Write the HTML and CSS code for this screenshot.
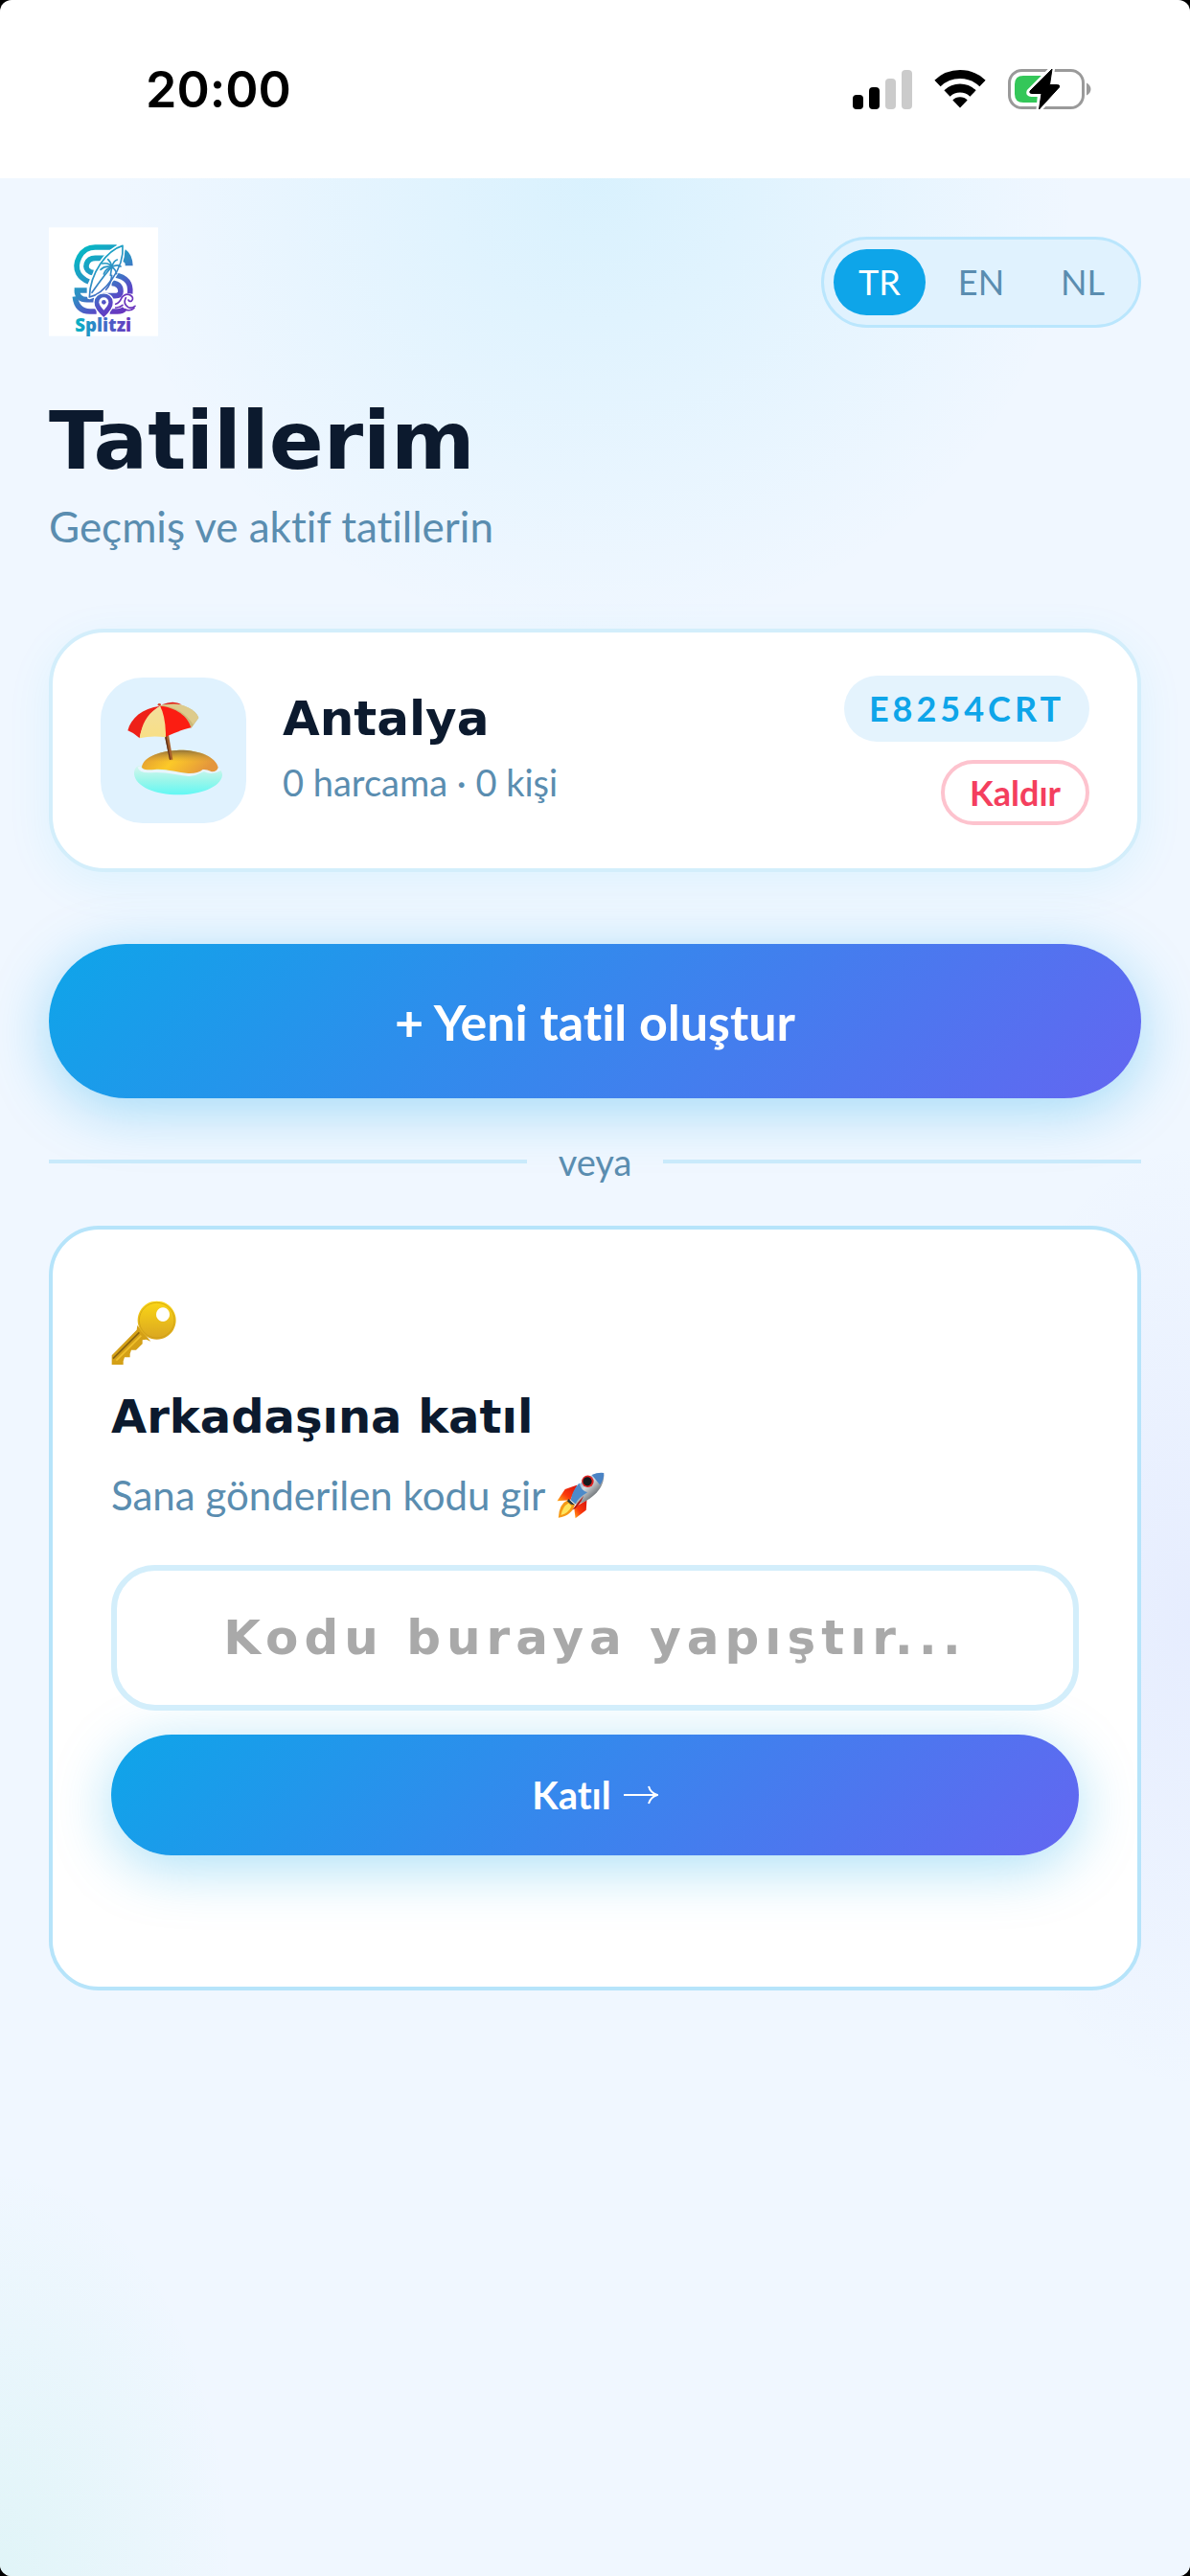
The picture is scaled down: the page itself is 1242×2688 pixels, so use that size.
FILE: index.html
```html
<!DOCTYPE html>
<html lang="tr">
<head>
<meta charset="utf-8">
<meta name="viewport" content="width=device-width, initial-scale=1">
<title>Splitzi – Tatillerim</title>
<link rel="stylesheet" href="styles.css">
</head>
<body>
<div class="screen">
  <div class="status-bar">
    <time class="status-time">20:00</time>
    <div class="status-icons">
      <svg class="signal" viewBox="0 0 62 41" aria-hidden="true">
        <rect x="0" y="26" width="11" height="15" rx="4"/>
        <rect x="17" y="18" width="11" height="23" rx="4"/>
        <rect x="34" y="9" width="11" height="32" rx="4" fill="#cbcbcb"/>
        <rect x="51" y="0" width="11" height="41" rx="4" fill="#cbcbcb"/>
      </svg>
      <svg class="wifi" viewBox="0 0 54 40" aria-hidden="true">
        <g fill="none" stroke="#000" stroke-width="9">
          <path d="M3.5 14A34 34 0 0 1 50.5 14"/>
          <path d="M13.5 24.5A19.5 19.5 0 0 1 40.5 24.5"/>
        </g>
        <path d="M27 39.5L19.3 31.5A11 11 0 0 1 34.7 31.5Z"/>
      </svg>
      <svg class="battery" viewBox="0 0 88 44" aria-hidden="true">
        <rect x="1.5" y="2.5" width="77" height="39" rx="13" fill="none" stroke="#9a9a9a" stroke-width="3"/>
        <path d="M82 15.5c6 3 6 10 0 13z" fill="#9a9a9a"/>
        <path d="M16 8H37V36H16Q7 36 7 27V17Q7 8 16 8Z" fill="#34c759"/>
        <path d="M46 1L22.500 24.500Q21.500 27 24.500 27H34L32.500 43L53.500 20Q54.500 17.500 51.500 17.500H43.500Z" fill="#fff" stroke="#fff" stroke-width="6" stroke-linejoin="round"/>
        <path d="M46 1L23 24Q22 26.500 25 26.500H35L32.500 43L53.500 20Q54.500 17.500 51.500 17.500H43.500Z" stroke="#000" stroke-linejoin="round"/>
      </svg>
    </div>
  </div>

  <main class="page">
    <header class="top">
      <svg class="logo" viewBox="31 36 342 340" role="img" aria-label="Splitzi">
        <defs>
          <linearGradient id="brand" gradientUnits="userSpaceOnUse" x1="130" y1="110" x2="270" y2="300">
            <stop offset="0" stop-color="#06b6c4"/>
            <stop offset=".45" stop-color="#2f8fc4"/>
            <stop offset=".8" stop-color="#5b45c6"/>
            <stop offset="1" stop-color="#6a35bd"/>
          </linearGradient>
          <linearGradient id="word" gradientUnits="userSpaceOnUse" x1="113" y1="0" x2="290" y2="0">
            <stop offset="0" stop-color="#06b6c4"/>
            <stop offset=".6" stop-color="#4a62c8"/>
            <stop offset="1" stop-color="#6a35bd"/>
          </linearGradient>
        </defs>
        <rect x="31" y="36" width="342" height="340" fill="#fff"/>
        <g fill="none" stroke="url(#brand)" stroke-width="17">
          <path d="M243 98H176C130 98 108 150 124 180Q133 196 156 206"/>
          <path d="M214 132H176C148 132 138 165 160 175Q166 178 172 177"/>
          <path d="M111 233H150M119 233Q120 262 150 262H172"/>
          <path d="M113 252Q118 298 160 299H180M222 299H245Q262 298 268 290"/>
          <path d="M236 184C280 192 288 215 285 243"/>
          <path d="M228 210Q256 212 256 236Q256 250 238 250H200"/>
        </g>
        <path d="M270 104Q293 120 294 156H270Q272 143 258 142Q264 124 270 104Z" fill="url(#brand)"/>
        <path d="M262 93C212 108 160 178 158 254C200 245 268 170 262 93Z" fill="#fff" stroke="#fff" stroke-width="14" stroke-linejoin="round"/>
        <path d="M262 93C212 108 160 178 158 254C200 245 268 170 262 93Z" fill="#fff" stroke="url(#brand)" stroke-width="5" stroke-linejoin="round"/>
        <g fill="none" stroke="url(#brand)" stroke-width="5" stroke-linecap="round">
          <path d="M228 160Q208 180 166 240"/>
          <path d="M228 160Q220 145 198 149M228 160Q206 155 193 168M228 160Q226 145 216 136M228 160Q234 140 245 137M228 160Q244 150 256 158M228 160Q240 166 243 181M228 160Q226 172 224 186M228 160Q208 166 203 182"/>
          <path d="M228 186Q226 212 210 231"/>
        </g>
        <path d="M203 320Q170 290 172 270C173 232 232 232 233 270Q235 290 203 320Z" fill="url(#brand)" stroke="#fff" stroke-width="4"/>
        <path d="M203 295Q188 280 188 270A15 15 0 0 1 218 270Q218 280 203 295Z" fill="#fff"/>
        <circle cx="203" cy="270" r="7" fill="url(#brand)"/>
        <g fill="none" stroke="#6a35bd" stroke-width="5" stroke-linecap="round">
          <path d="M240 276Q252 272 258 258Q270 240 286 248Q299 256 290 266Q284 270 280 263"/>
          <path d="M272 256Q262 276 280 286Q290 290 301 282"/>
          <path d="M240 287Q252 288 262 279M270 292Q286 300 298 288"/>
        </g>
        <text class="logo-word" x="201" y="361" text-anchor="middle" fill="url(#word)">Splitzi</text>
      </svg>
      <nav class="langs" aria-label="Dil">
        <button type="button" class="lang lang-active" aria-pressed="true">TR</button>
        <button type="button" class="lang" aria-pressed="false">EN</button>
        <button type="button" class="lang" aria-pressed="false">NL</button>
      </nav>
    </header>

    <h1 class="title">Tatillerim</h1>
    <p class="subtitle">Geçmiş ve aktif tatillerin</p>

    <article class="trip">
      <div class="trip-icon">
        <svg class="beach" viewBox="108 127 300 300" aria-hidden="true">
          <defs>
            <linearGradient id="sea" x1="0" y1="0" x2="0" y2="1">
              <stop offset="0" stop-color="#d9f5ee"/>
              <stop offset=".5" stop-color="#9cf6ea"/>
              <stop offset="1" stop-color="#62f8f4"/>
            </linearGradient>
            <linearGradient id="sand" x1="0" y1="0" x2="1" y2=".3">
              <stop offset="0" stop-color="#dd9332"/>
              <stop offset=".5" stop-color="#fcc928"/>
              <stop offset="1" stop-color="#e4963c"/>
            </linearGradient>
            <linearGradient id="dune" x1="0" y1="0" x2="0" y2="1">
              <stop offset="0" stop-color="#8f713a"/>
              <stop offset=".5" stop-color="#c4913a" stop-opacity="0"/>
            </linearGradient>
            <linearGradient id="cream" x1="0" y1="0" x2="0" y2="1">
              <stop offset="0" stop-color="#f3df9d"/>
              <stop offset="1" stop-color="#f8df85"/>
            </linearGradient>
          </defs>
          <path d="M135 352C134 328 150 320 165 326L395 332Q411 338 411 356C405 392 345 416 274 416C200 416 140 390 135 352Z" fill="url(#sea)"/>
          <path d="M150 328Q155 345 190 342C230 338 270 350 300 353C330 358 340 338 355 339Q378 352 404 336" fill="none" stroke="#e9f5fd" stroke-width="9"/>
          <path d="M159 330C162 295 225 277 277 276C345 276 392 300 398 330Q396 342 378 344Q360 335 350 337Q335 350 305 349C270 347 235 334 200 337Q165 341 159 330Z" fill="url(#sand)"/>
          <path d="M159 330C162 295 225 277 277 276C345 276 392 300 398 330Q396 342 378 344Q360 335 350 337Q335 350 305 349C270 347 235 334 200 337Q165 341 159 330Z" fill="url(#dune)"/>
          <path d="M230 228L246 306H256L243 228Z" fill="#a8612c"/>
          <path d="M230 228L246 306H249L235 228Z" fill="#5b3018"/>
          <path d="M222 134Q258 118 284 134L240 138Z" fill="#e3170f"/>
          <path d="M216 137C262 124 325 140 337 175L314 207Z" fill="#cbb878"/>
          <path d="M216 137Q282 140 320 196L337 175C325 145 275 124 240 134Z" fill="#ddcb8c"/>
          <path d="M216 138C265 142 304 170 313 206Q285 212 234 234Z" fill="#fb1d12"/>
          <path d="M216 138C160 146 125 175 115 215Q130 220 152 239Q165 170 216 138Z" fill="#ee2118"/>
          <path d="M216 138C178 160 160 190 152 239Q190 230 234 236Q234 170 216 138Z" fill="url(#cream)"/>
          <ellipse cx="214" cy="134" rx="5" ry="4" fill="#d6452a"/>
        </svg>
      </div>
      <div class="trip-info">
        <h2 class="trip-name">Antalya</h2>
        <p class="trip-meta">0 harcama · 0 kişi</p>
      </div>
      <div class="trip-side">
        <span class="code">E8254CRT</span>
        <button type="button" class="remove">Kaldır</button>
      </div>
    </article>

    <button type="button" class="primary create">+ Yeni tatil oluştur</button>

    <div class="divider"><span>veya</span></div>

    <form class="join">
      <svg class="key" viewBox="80 80 204 204" aria-hidden="true">
        <defs>
          <linearGradient id="gold" x1="0" y1="0" x2="0" y2="1">
            <stop offset="0" stop-color="#fbd716"/>
            <stop offset="1" stop-color="#d9a521"/>
          </linearGradient>
        </defs>
        <path d="M162 158L160 172L82 252V281H118V270L122 258H139V247L143 235H158L178 216V204L190 202L204 208Z" fill="#d4a017"/>
        <path d="M168 180L86 262" stroke="#87610f" stroke-width="5"/>
        <path d="M174 190L96 268" stroke="#f0c02a" stroke-width="5"/>
        <path fill-rule="evenodd" d="M223 82A60 60 0 1 1 222.900 82ZM242 102A21 22 0 1 0 242.100 102Z" fill="url(#gold)"/>
        <circle cx="223" cy="142" r="55" fill="none" stroke="#c99a14" stroke-width="2"/>
      </svg>
      <h2 class="join-title">Arkadaşına katıl</h2>
      <p class="join-text"><label for="code">Sana gönderilen kodu gir</label>
        <svg class="rocket" viewBox="56 54 160 152" aria-hidden="true">
          <defs>
            <linearGradient id="hull" x1="0" y1="0" x2="1" y2="1">
              <stop offset=".2" stop-color="#5f97cf"/>
              <stop offset=".45" stop-color="#d9dde0"/>
              <stop offset=".7" stop-color="#777c80"/>
            </linearGradient>
            <linearGradient id="fin" x1="1" y1="0" x2="0" y2="1">
              <stop offset="0" stop-color="#d8120c"/>
              <stop offset=".6" stop-color="#fb3a0c"/>
              <stop offset="1" stop-color="#ffae1a"/>
            </linearGradient>
          </defs>
          <path d="M124 98L85 112L60 149L102 146Z" fill="url(#fin)"/>
          <path d="M154 146L152 178L118 204L114 170Z" fill="url(#fin)"/>
          <path d="M94 146Q66 158 64 202Q108 196 116 160Z" fill="#f59a16"/>
          <path d="M96 156Q78 166 72 194Q96 188 106 166Z" fill="#ffe45c"/>
          <path d="M208 60C170 58 120 88 103 146L118 160C170 150 214 104 208 60Z" fill="url(#hull)"/>
          <path d="M130 92Q108 116 103 146L118 158Q126 140 156 122Q136 116 130 92Z" fill="#4d8bc9"/>
          <path d="M208 60Q188 58 170 66L196 98Q210 78 208 60Z" fill="#4a83c4"/>
          <path d="M96 142L116 162L104 160L92 150Z" fill="#26363f"/>
          <path d="M144 132L118 164L108 178Q130 168 144 132Z" fill="#b3140e"/>
          <circle cx="157" cy="87" r="19" fill="#e02424"/>
          <circle cx="156" cy="87" r="14" fill="#15191d"/>
        </svg>
      </p>
      <input class="code-input" id="code" type="text" placeholder="Kodu buraya yapıştır...">
      <button type="button" class="primary join-button">Katıl
        <svg class="arrow" viewBox="0 0 36 20" aria-hidden="true"><path d="M0 10H35M26 1Q28 8 35 10Q28 12 26 19" fill="none" stroke="#fff" stroke-width="2"/></svg>
      </button>
    </form>
  </main>
</div>
</body>
</html>
```
FILE: styles.css
```css
:root {
  --body: Lato, "Noto Sans", sans-serif;
  --display: "DejaVu Sans", sans-serif;
  --ink: #0c1a2e;
  --muted: #5a8db0;
  --sky: #0ea5e9;
  --line: #d3eefb;
  --line-strong: #b6e4fa;
}

* {
  box-sizing: border-box;
}

body {
  margin: 0;
  background: #000;
  font-family: var(--body);
  font-variant-ligatures: none;
  color: var(--ink);
}

h1, h2, p {
  margin: 0;
}

button, input {
  font-family: inherit;
  font-variant-ligatures: inherit;
}

svg {
  display: block;
  flex: none;
}

.screen {
  min-height: 100vh;
  display: flex;
  flex-direction: column;
  border-radius: 12px;
  overflow: hidden;
  background: #fff;
}

.status-bar {
  height: 186px;
  padding: 0 102px 0 152px;
  display: flex;
  align-items: center;
  justify-content: space-between;
}

.status-time {
  font-family: Inter, sans-serif;
  font-size: 52px;
  font-weight: 600;
  color: #000;
}

.status-icons {
  display: flex;
  align-items: center;
  gap: 23px;
}

.signal {
  width: 62px;
  height: 41px;
}

.wifi {
  width: 54px;
  height: 40px;
}

.battery {
  width: 88px;
  height: 44px;
}

.page {
  flex: 1;
  padding: 51px;
  background:
    radial-gradient(506px 480px at 50% 0, rgba(14, 190, 240, .1), rgba(14, 190, 240, 0)),
    radial-gradient(250px 500px at 100% 1500px, rgba(99, 102, 241, .07), rgba(99, 102, 241, 0)),
    radial-gradient(245px 428px at 0 100%, rgba(16, 210, 150, .07), rgba(16, 210, 190, 0)),
    #f0f7ff;
}

.top {
  display: flex;
  align-items: center;
  justify-content: space-between;
}

.logo {
  width: 114px;
  height: 114px;
}

.logo-word {
  font-family: "Open Sans", sans-serif;
  font-size: 56px;
  font-weight: 800;
}

.langs {
  display: flex;
  gap: 10px;
  padding: 10px;
  border: 3px solid #bae6fd;
  border-radius: 48px;
  background: #e0f2fe;
}

.lang {
  width: 96px;
  height: 69px;
  padding: 0;
  border: 0;
  border-radius: 35px;
  background: transparent;
  font-size: 36px;
  color: var(--muted);
}

.lang-active {
  background: var(--sky);
  color: #fff;
}

.title {
  margin-top: 67px;
  font-family: var(--display);
  font-size: 84px;
  line-height: 84px;
  font-weight: 700;
}

.subtitle {
  margin-top: 17px;
  font-size: 44px;
  line-height: 60px;
  color: var(--muted);
}

.trip {
  margin-top: 77px;
  padding: 45px 50px;
  display: flex;
  align-items: center;
  gap: 38px;
  border: 4px solid var(--line);
  border-radius: 58px;
  background: #fff;
  box-shadow: 0 12px 48px rgba(14, 185, 240, .08);
}

.trip-icon {
  width: 152px;
  height: 152px;
  display: flex;
  align-items: center;
  justify-content: center;
  border-radius: 44px;
  background: #e0f2fe;
}

.beach {
  width: 100px;
  height: 100px;
  overflow: visible;
}

.trip-info {
  flex: 1;
}

.trip-name {
  font-family: var(--display);
  font-size: 50px;
  line-height: 60px;
  font-weight: 700;
}

.trip-meta {
  margin-top: 6px;
  font-size: 38px;
  line-height: 60px;
  color: var(--muted);
}

.trip-side {
  display: flex;
  flex-direction: column;
  align-items: flex-end;
  gap: 19px;
}

.code {
  padding: 0 26px;
  border-radius: 35px;
  background: #e4f3fd;
  font-size: 36px;
  line-height: 69px;
  font-weight: 700;
  letter-spacing: 4px;
  color: var(--sky);
}

.remove {
  height: 68px;
  padding: 0 26px;
  border: 4px solid #fdc3ce;
  border-radius: 34px;
  background: #fff;
  font-size: 36px;
  font-weight: 700;
  color: #f43f5e;
}

.primary {
  width: 100%;
  display: flex;
  align-items: center;
  justify-content: center;
  border: 0;
  background: linear-gradient(135deg, #0ea5e9, #6366f1);
  box-shadow: 0 12px 60px rgba(14, 165, 233, .35);
  font-weight: 700;
  color: #fff;
}

.create {
  height: 161px;
  margin-top: 75px;
  border-radius: 81px;
  font-size: 52px;
}

.divider {
  margin-top: 41px;
  display: flex;
  align-items: center;
  gap: 33px;
  font-size: 38px;
  line-height: 50px;
  color: var(--muted);
}

.divider::before,
.divider::after {
  content: "";
  flex: 1;
  height: 4px;
  background: #c9eafb;
}

.join {
  margin-top: 42px;
  padding: 74px 61px 137px;
  border: 4px solid var(--line-strong);
  border-radius: 52px;
  background: #fff;
}

.key {
  width: 68px;
  height: 68px;
}

.join-title {
  margin-top: 23px;
  font-family: var(--display);
  font-size: 48px;
  line-height: 60px;
  font-weight: 700;
}

.join-text {
  margin-top: 22px;
  display: flex;
  align-items: center;
  gap: 11px;
  font-size: 42px;
  line-height: 60px;
  color: var(--muted);
}

.rocket {
  width: 53px;
  height: 50px;
}

.code-input {
  width: 100%;
  height: 152px;
  margin-top: 43px;
  padding: 0 40px;
  border: 6px solid var(--line);
  border-radius: 46px;
  background: #fff;
  font-family: var(--display);
  font-size: 50px;
  font-weight: 700;
  letter-spacing: 6px;
  text-align: center;
  color: var(--ink);
}

.code-input::placeholder {
  color: #a9a9a9;
  opacity: 1;
}

.join-button {
  height: 126px;
  margin-top: 25px;
  gap: 13px;
  border-radius: 63px;
  font-size: 40px;
}

.arrow {
  width: 36px;
  height: 20px;
}
```
